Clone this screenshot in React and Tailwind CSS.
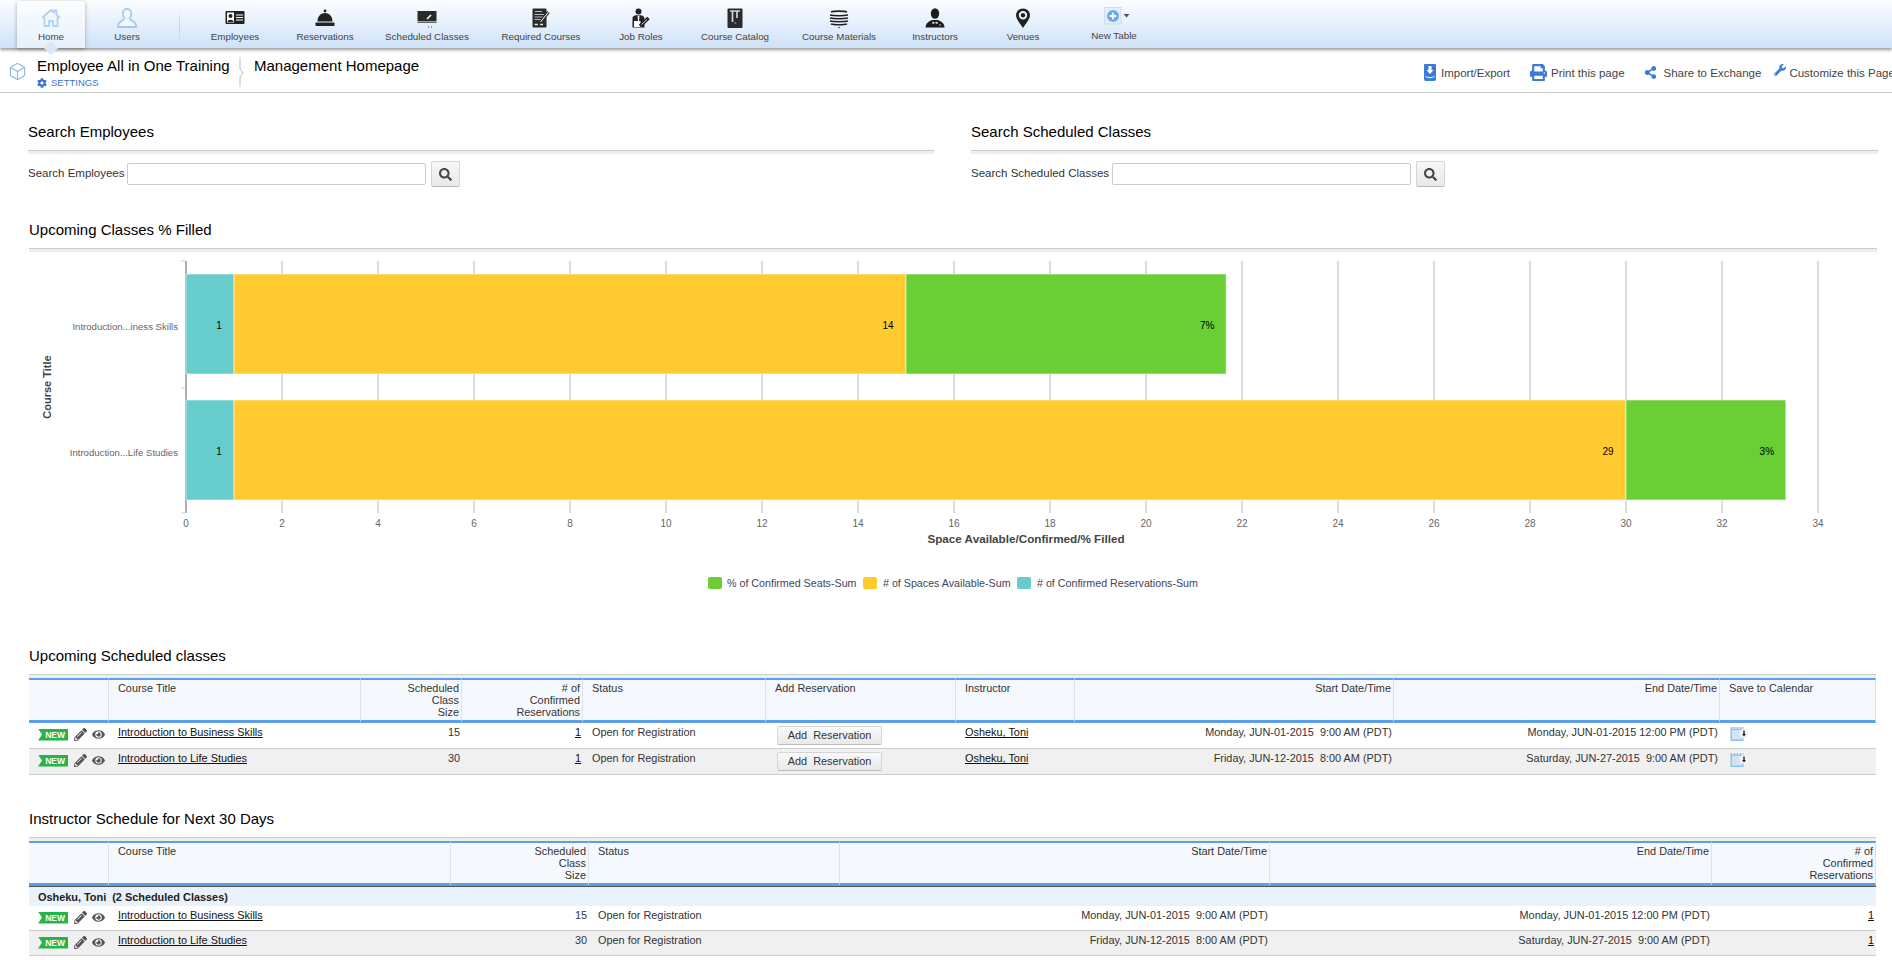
import { Box } from "lucide-react";
import { FaCog, FaEye, FaPencilAlt, FaPrint, FaSearch, FaShareAlt, FaWrench } from "react-icons/fa";

// nav icons are all drawn on a 20x20 box
const HomeIcon = () => (
  <svg viewBox="0 0 20 20" className="h-5 w-5">
    <path d="M10 2 L1.5 9.5 H3.5 V18 H8 V13 H12 V18 H16.5 V9.5 H18.5 L15.5 6.8 V2.5 H13 V4.5 Z" fill="#f1f7fe" stroke="#b2d1f3" strokeWidth="1.8" strokeLinejoin="round" />
  </svg>
);

const UserIcon = () => (
  <svg viewBox="0 0 20 20" className="h-5 w-5">
    <ellipse cx="10" cy="6" rx="4.2" ry="5.2" fill="#f2f7fd" stroke="#a5c8ef" strokeWidth="1.8" />
    <path d="M7 10.5 C6 13.5 1 13.5 1 17.5 V19 H19 V17.5 C19 13.5 14 13.5 13 10.5" fill="#f2f7fd" stroke="#a5c8ef" strokeWidth="1.8" />
  </svg>
);

const CardIcon = () => (
  <svg viewBox="0 0 20 20" className="h-5 w-5">
    <rect x="0.5" y="3" width="19" height="13" rx="1" fill="#222" />
    <rect x="2" y="4.5" width="7" height="10" fill="#fff" />
    <circle cx="5.5" cy="8" r="2" fill="#222" />
    <path d="M2.5 14 C2.5 11 8.5 11 8.5 14 Z" fill="#222" />
    <path d="M11 7 H18 M11 9.5 H18 M11 12 H18" stroke="#fff" strokeWidth="1.2" />
  </svg>
);

const BellIcon = () => (
  <svg viewBox="0 0 20 20" className="h-5 w-5">
    <circle cx="10" cy="3" r="1.4" fill="#222" />
    <path d="M2.5 13.5 C2.5 8 6 5 10 5 C14 5 17.5 8 17.5 13.5 Z" fill="#222" />
    <rect x="0.5" y="14.5" width="19" height="3.5" rx="0.8" fill="#222" />
  </svg>
);

const BoardIcon = () => (
  <svg viewBox="0 0 20 20" className="h-5 w-5">
    <rect x="0.5" y="3" width="19" height="10" fill="#2a2a2a" />
    <path d="M10 11 L14 7" stroke="#fff" strokeWidth="1.6" />
    <rect x="0.5" y="13.5" width="19" height="1.4" fill="#555" />
    <path d="M11 19 H12 M14 19 H15" stroke="#444" strokeWidth="1" />
  </svg>
);

const DocIcon = () => (
  <svg viewBox="0 0 20 20" className="h-5 w-5">
    <rect x="1.5" y="0.5" width="14" height="19" rx="1" fill="#2b2b2b" />
    <path d="M4 3.5 H11 M3.5 6.5 H13 M3.5 9 H13 M3.5 11.5 H10" stroke="#bbb" strokeWidth="1" />
    <path d="M3.5 16.5 H7 M9 16.5 H12" stroke="#ddd" strokeWidth="1.4" />
    <path d="M9.5 14 L17.5 4" stroke="#2b2b2b" strokeWidth="3" />
    <path d="M9.5 14 L17.5 4" stroke="#fff" strokeWidth="1" />
  </svg>
);

const JobIcon = () => (
  <svg viewBox="0 0 20 20" className="h-5 w-5">
    <circle cx="7.5" cy="3.5" r="3" fill="#222" />
    <path d="M1.5 19.5 V10 C1.5 8 4 7 7.5 7 C11 7 13 8 13.5 10 V19.5 Z" fill="#222" />
    <path d="M6.5 7.5 H8.5 L8 13 H7 Z" fill="#fff" />
    <rect x="3" y="13" width="6.5" height="6" fill="#fff" />
    <path d="M9 18 L17.5 10" stroke="#222" strokeWidth="3.6" />
    <path d="M10.5 16.5 L16 11.5" stroke="#fff" strokeWidth="0.8" />
  </svg>
);

const BookIcon = () => (
  <svg viewBox="0 0 20 20" className="h-5 w-5">
    <rect x="2.5" y="0.5" width="15" height="19.5" rx="1" fill="#2b2b2b" />
    <path d="M5 3 H15" stroke="#ddd" strokeWidth="1.4" />
    <path d="M7.5 3 V14 M12 3 V10" stroke="#ddd" strokeWidth="1.6" />
    <path d="M9.5 16 L10.5 14 L11 16" stroke="#888" strokeWidth="0.8" fill="none" />
  </svg>
);

const StackIcon = () => (
  <svg viewBox="0 0 20 20" className="h-5 w-5">
    <path d="M2 4 C5 2.8 15 2.8 18 4 M1 7 C5 8 15 8 19 7 M1 10 C5 11 15 11 19 10 M1 13 C5 14 15 14 19 13 M2 16 C5 17 15 17 18 16" stroke="#222" strokeWidth="1.7" fill="none" />
    <path d="M9.5 19.5 H11" stroke="#333" strokeWidth="1" />
  </svg>
);

const InstructorIcon = () => (
  <svg viewBox="0 0 20 20" className="h-5 w-5">
    <ellipse cx="10" cy="5.5" rx="4.2" ry="5.3" fill="#1c1c1c" />
    <path d="M0.5 19.5 C0.5 15 4 13.5 7 12 H13 C16 13.5 19.5 15 19.5 19.5 Z" fill="#1c1c1c" />
    <path d="M7.5 13.5 L10 14.7 L12.5 13.5 V16 L10 14.9 L7.5 16 Z" fill="#fff" />
    <circle cx="15" cy="17" r="0.7" fill="#fff" />
  </svg>
);

const PinIcon = () => (
  <svg viewBox="0 0 20 20" className="h-5 w-5">
    <path fillRule="evenodd" d="M10 0.5 C5.8 0.5 3 3.5 3 7.3 C3 11 7.5 16 10 20 C12.5 16 17 11 17 7.3 C17 3.5 14.2 0.5 10 0.5 Z M10 3 A4.2 4.2 0 1 0 10 11.4 A4.2 4.2 0 1 0 10 3 Z" fill="#222" />
    <circle cx="10" cy="7.2" r="2.2" fill="#222" />
  </svg>
);

const NewTableIcon = () => (
  <svg viewBox="0 0 26 18" className="h-[18px] w-[26px]">
    <rect x="0.5" y="0.5" width="16.5" height="16.5" fill="#e3effc" stroke="#9cc3ee" strokeWidth="0.8" strokeDasharray="1 1" />
    <circle cx="9" cy="9" r="6" fill="#6ea9ec" />
    <path d="M9 5.8 V12.2 M5.8 9 H12.2" stroke="#fff" strokeWidth="1.8" />
    <path d="M19.5 7 H25.5 L22.5 10.5 Z" fill="#555" />
  </svg>
);

const navItems = [
  { label: "Employees", w: "w-[110px]", icon: <CardIcon /> },
  { label: "Reservations", w: "w-[70px]", icon: <BellIcon /> },
  { label: "Scheduled Classes", w: "w-[134px]", icon: <BoardIcon /> },
  { label: "Required Courses", w: "w-[94px]", icon: <DocIcon /> },
  { label: "Job Roles", w: "w-[106px]", icon: <JobIcon /> },
  { label: "Course Catalog", w: "w-[82px]", icon: <BookIcon /> },
  { label: "Course Materials", w: "w-[126px]", icon: <StackIcon /> },
  { label: "Instructors", w: "w-[66px]", icon: <InstructorIcon /> },
  { label: "Venues", w: "w-[110px]", icon: <PinIcon /> },
];

function NavItem({ label, w, icon }) {
  return (
    <div className={`${w} flex shrink-0 flex-col items-center pt-2`}>
      <div className="flex h-5 items-center justify-center">{icon}</div>
      <span className="mt-[2px] whitespace-nowrap text-[9.8px] leading-[13px] text-[#444]">{label}</span>
    </div>
  );
}

function TopNav() {
  return (
    <div className="relative z-10 flex h-12 shrink-0 bg-gradient-to-b from-[#fbfdff] to-[#cfe2f8] pl-[17px] shadow-[0_2px_3px_rgba(0,0,0,0.4)]">
      <div className="relative mt-px flex h-[47px] w-[68px] shrink-0 flex-col items-center rounded-t-[3px] bg-gradient-to-b from-[#fcfdff] to-[#e6f0fb] pt-[7px] shadow-[0_1px_4px_rgba(0,0,0,0.3)]">
        <div className="flex h-5 items-center justify-center"><HomeIcon /></div>
        <span className="mt-[2px] text-[9.8px] leading-[13px] text-[#444]">Home</span>
        <div className="absolute -bottom-[5px] left-[29px] h-[10px] w-[10px] rotate-45 bg-[#dbe7f4]" />
      </div>
      <NavItem label="Users" w="w-[84px]" icon={<UserIcon />} />
      <div className="ml-[10px] mt-2 h-[38px] w-px shrink-0 bg-gradient-to-b from-transparent via-[#b7d0ec] to-transparent" />
      {navItems.map((item) => (
        <NavItem key={item.label} {...item} />
      ))}
      <div className="flex w-[72px] shrink-0 flex-col items-center pt-[7px]">
        <div className="flex h-[18px] items-center pl-[6px]"><NewTableIcon /></div>
        <span className="mt-[4px] whitespace-nowrap text-[9.8px] leading-[13px] text-[#444]">New Table</span>
      </div>
    </div>
  );
}

function ImportIcon() {
  return (
    <svg viewBox="0 0 12 17" className="h-[17px] w-3 shrink-0">
      <path d="M1 0 H11 A1 1 0 0 1 12 1 V15 A2 2 0 0 1 10 17 H2 A2 2 0 0 1 0 15 V1 A1 1 0 0 1 1 0 Z" fill="#3b7bdc" />
      <path d="M4.5 2 H7.5 V6 H9.5 L6 10 L2.5 6 H4.5 Z" fill="#fff" />
      <path d="M1.5 12.5 C4 14 8 14 10.5 12.5" stroke="#fff" strokeWidth="1" fill="none" />
    </svg>
  );
}

function SubHeader() {
  return (
    <div className="flex h-[45px] shrink-0 border-b border-[#ccc] text-[#222]">
      <div className="ml-2 mt-[14px] w-[29px] shrink-0">
        <Box className="h-[19px] w-[19px] text-[#8db7e6]" strokeWidth={1.4} />
      </div>
      <div className="w-[202px] shrink-0 pt-[10px]">
        <div className="whitespace-nowrap text-[15px] leading-4 text-black">Employee All in One Training</div>
        <div className="mt-[3px] flex items-center gap-[4px] text-[9.5px] leading-3 text-[#3b74d8]">
          <FaCog className="h-[10px] w-[10px]" />
          SETTINGS
        </div>
      </div>
      <svg viewBox="0 0 5 30" className="mt-[9px] h-[30px] w-[5px] shrink-0">
        <path d="M1 0 V12 L4 16 L1 20 V30" stroke="#bbb" strokeWidth="1" fill="none" />
      </svg>
      <div className="ml-[10px] whitespace-nowrap pt-[10px] text-[15px] leading-4 text-black">Management Homepage</div>
      <div className="flex-1" />
      <div className="flex w-[468px] shrink-0 items-start overflow-hidden pt-4 text-[11.5px] leading-4 text-[#444]">
        <ImportIcon />
        <span className="ml-[5px] whitespace-nowrap pt-px">Import/Export</span>
        <FaPrint className="ml-[20px] h-[17px] w-[17px] shrink-0 text-[#3b7bdc]" />
        <span className="ml-[4px] whitespace-nowrap pt-px">Print this page</span>
        <FaShareAlt className="ml-[19px] mt-[2px] h-[13px] w-[13px] shrink-0 text-[#3b7bdc]" />
        <span className="ml-[7px] whitespace-nowrap pt-px">Share to Exchange</span>
        <FaWrench className="ml-[13px] h-[12px] w-[12px] shrink-0 text-[#3b7bdc]" />
        <span className="ml-[3px] whitespace-nowrap pt-px">Customize this Page</span>
      </div>
    </div>
  );
}

function SectionTitle({ children }) {
  return (
    <div>
      <div className="mb-[9px] whitespace-nowrap text-[15px] leading-[18px] text-black">{children}</div>
      <div className="h-1 border-t border-[#ccc] bg-[#eee]" />
    </div>
  );
}

function SearchBox({ label, inputClass }) {
  return (
    <div className="mt-[7px] flex items-center">
      <span className="whitespace-nowrap text-[11.5px] text-[#333]">{label}</span>
      <div className={`${inputClass} h-[22px] rounded-[2px] border border-[#ccc] bg-white`} />
      <div className="ml-[5px] flex h-[26px] w-[29px] items-center justify-center rounded-[2px] border border-[#d5d5d5] border-b-[#bbb] bg-gradient-to-b from-[#f7f7f7] to-[#e9e9e9]">
        <FaSearch className="h-[13px] w-[13px] text-[#444]" />
      </div>
    </div>
  );
}

const ticks = [0, 2, 4, 6, 8, 10, 12, 14, 16, 18, 20, 22, 24, 26, 28, 30, 32, 34];
const unit = 48;
const axisX = 186;

const bars = [
  { y: 274, label: "Introduction...iness Skills", seats: 1, spaces: 14, percent: 21.67, pctLabel: "7%" },
  { y: 400, label: "Introduction...Life Studies", seats: 1, spaces: 29, percent: 33.33, pctLabel: "3%" },
];

function Chart() {
  return (
    <svg viewBox="0 255 1892 345" className="mt-[3px] block h-[345px] w-[1892px] shrink-0">
      {ticks.map((t) => (
        <g key={t}>
          {t > 0 && <line x1={axisX + t * unit} x2={axisX + t * unit} y1="261" y2="513" stroke="#ccc" strokeWidth="1.4" />}
          <text x={axisX + t * unit} y="527" textAnchor="middle" fontSize="10" fill="#666">{t}</text>
        </g>
      ))}
      <line x1="186" x2="186" y1="261" y2="513" stroke="#999" strokeWidth="1.6" />
      <path d="M181 261 H186 M181 388 H186 M181 513 H186" stroke="#ccc" strokeWidth="1" />
      {bars.map((b) => {
        const teal = axisX + b.seats * unit;
        const yellow = teal + b.spaces * unit;
        const green = axisX + b.percent * unit;
        return (
          <g key={b.y} stroke="#fff" strokeOpacity="0.55" strokeWidth="1">
            <rect x={axisX} y={b.y} width={teal - axisX} height="100" fill="#66cdcc" />
            <rect x={teal} y={b.y} width={yellow - teal} height="100" fill="#ffcb30" />
            <rect x={yellow} y={b.y} width={green - yellow} height="100" fill="#69cf34" />
            <g stroke="none" fontSize="10" fill="#000" textAnchor="middle">
              <text x="219" y={b.y + 55}>{b.seats}</text>
              <text x={yellow - 18} y={b.y + 55}>{b.spaces}</text>
              <text x={green - 19} y={b.y + 55}>{b.pctLabel}</text>
            </g>
            <text x="178" y={b.y + 56} textAnchor="end" fontSize="9.6" fill="#666" stroke="none">{b.label}</text>
          </g>
        );
      })}
      <text x="1026" y="543" textAnchor="middle" fontSize="11.7" fontWeight="700" fill="#444">Space Available/Confirmed/% Filled</text>
      <text transform="translate(51 387) rotate(-90)" textAnchor="middle" fontSize="11" fontWeight="700" fill="#444">Course Title</text>
      <rect x="708" y="577" width="14" height="12" rx="2" fill="#69cf34" />
      <text x="727" y="587" fontSize="10.7" fill="#445">% of Confirmed Seats-Sum</text>
      <rect x="863" y="577" width="14" height="12" rx="2" fill="#ffcb30" />
      <text x="883" y="587" fontSize="10.7" fill="#445"># of Spaces Available-Sum</text>
      <rect x="1017" y="577" width="14" height="12" rx="2" fill="#66cdcc" />
      <text x="1037" y="587" fontSize="10.7" fill="#445"># of Confirmed Reservations-Sum</text>
    </svg>
  );
}

function NewBadge() {
  return (
    <div className="flex h-3 w-[30px] items-center justify-end bg-[#27b34b] pr-[3px] text-[8.5px] font-bold leading-3 text-white [clip-path:polygon(0_0,100%_0,100%_100%,0_100%,4px_50%)]">
      NEW
    </div>
  );
}

function RowIcons() {
  return (
    <div className="flex items-center pl-[9px] pt-[5px]">
      <NewBadge />
      <FaPencilAlt className="ml-[6px] h-[13px] w-[13px] text-[#555]" />
      <FaEye className="ml-[5px] h-[13px] w-[13px] text-[#555]" />
    </div>
  );
}

function CalendarIcon() {
  return (
    <svg viewBox="0 0 19 15" className="ml-[10px] mt-[3px] h-[15px] w-[19px]">
      <rect x="0.5" y="1" width="13" height="14" fill="#96c2ea" />
      <rect x="2" y="4" width="10" height="9.5" fill="#cfe4f7" />
      <path d="M3 0 V3 M6 0 V3 M9 0 V3 M12 0 V3" stroke="#fff" strokeWidth="1" />
      <circle cx="14" cy="7.5" r="4.5" fill="#f4f4f4" />
      <path d="M14 4.5 V9" stroke="#222" strokeWidth="1.4" />
      <path d="M12 8 H16 L14 10.5 Z" fill="#222" />
    </svg>
  );
}

function HeadCell({ lines, right }) {
  return (
    <th className={`border-r border-[#d5e3f2] px-0 pt-[2px] align-top text-[10.9px] font-normal leading-3 text-[#333] ${right ? "pr-[2px] text-right" : "pl-[9px] text-left"}`}>
      {lines.map((l) => (
        <div key={l} className="whitespace-nowrap">{l}</div>
      ))}
    </th>
  );
}

function Td({ children, right, rowClass }) {
  return (
    <td className={`${rowClass} whitespace-nowrap border-b border-[#ccc] pt-[3px] align-top text-[10.9px] leading-3 text-[#333] ${right ? "pr-[2px] text-right" : "pl-[9px] text-left"}`}>
      {children}
    </td>
  );
}

const LinkText = ({ children }) => <span className="text-[#111] underline">{children}</span>;

const scheduleRows = [
  { title: "Introduction to Business Skills", size: 15, start: "Monday, JUN-01-2015\u00a0 9:00 AM (PDT)", end: "Monday, JUN-01-2015 12:00 PM (PDT)" },
  { title: "Introduction to Life Studies", size: 30, start: "Friday, JUN-12-2015\u00a0 8:00 AM (PDT)", end: "Saturday, JUN-27-2015\u00a0 9:00 AM (PDT)" },
];

function ClassesTable() {
  return (
    <table className="w-[1847px] table-fixed border-separate border-spacing-0">
      <colgroup>
        <col className="w-[80px]" /><col className="w-[252px]" /><col className="w-[101px]" /><col className="w-[121px]" /><col className="w-[183px]" />
        <col className="w-[190px]" /><col className="w-[119px]" /><col className="w-[319px]" /><col className="w-[326px]" /><col className="w-[156px]" />
      </colgroup>
      <thead className="bg-[#f5f9fe] [&_th]:h-[45px] [&_th]:border-b-[3px] [&_th]:border-t-2 [&_th]:border-b-[#5b9fe8] [&_th]:border-t-[#5b9fe8]">
        <tr>
          <HeadCell lines={[]} />
          <HeadCell lines={["Course Title"]} />
          <HeadCell right lines={["Scheduled", "Class", "Size"]} />
          <HeadCell right lines={["# of", "Confirmed", "Reservations"]} />
          <HeadCell lines={["Status"]} />
          <HeadCell lines={["Add Reservation"]} />
          <HeadCell lines={["Instructor"]} />
          <HeadCell right lines={["Start Date/Time"]} />
          <HeadCell right lines={["End Date/Time"]} />
          <HeadCell lines={["Save to Calendar"]} />
        </tr>
      </thead>
      <tbody>
        {scheduleRows.map((r, i) => {
          const rowClass = `h-[26px] ${i === 1 ? "bg-[#f0f0f0]" : "bg-white"}`;
          return (
            <tr key={r.title}>
              <td className={`${rowClass} border-b border-[#ccc] align-top`}><RowIcons /></td>
              <Td rowClass={rowClass}><LinkText>{r.title}</LinkText></Td>
              <Td rowClass={rowClass} right>{r.size}</Td>
              <Td rowClass={rowClass} right><LinkText>1</LinkText></Td>
              <Td rowClass={rowClass}>Open for Registration</Td>
              <td className={`${rowClass} border-b border-[#ccc] pl-[11px] pt-[3px] align-top`}>
                <div className="flex h-[19px] w-[105px] items-center justify-center rounded-[2px] border border-[#d5d5d5] border-b-[#bbb] bg-gradient-to-b from-[#f9f9f9] to-[#e9e9e9] text-[10.9px] text-[#333]">
                  Add&nbsp; Reservation
                </div>
              </td>
              <Td rowClass={rowClass}><LinkText>Osheku, Toni</LinkText></Td>
              <Td rowClass={rowClass} right>{r.start}</Td>
              <Td rowClass={rowClass} right>{r.end}</Td>
              <td className={`${rowClass} border-b border-[#ccc] align-top`}><CalendarIcon /></td>
            </tr>
          );
        })}
      </tbody>
    </table>
  );
}

function InstructorTable() {
  return (
    <table className="w-[1847px] table-fixed border-separate border-spacing-0">
      <colgroup>
        <col className="w-[80px]" /><col className="w-[342px]" /><col className="w-[138px]" /><col className="w-[251px]" />
        <col className="w-[430px]" /><col className="w-[442px]" /><col className="w-[164px]" />
      </colgroup>
      <thead className="bg-[#f5f9fe] [&_th]:h-[45px] [&_th]:border-b-[3px] [&_th]:border-t-2 [&_th]:border-b-[#5b9fe8] [&_th]:border-t-[#5b9fe8]">
        <tr>
          <HeadCell lines={[]} />
          <HeadCell lines={["Course Title"]} />
          <HeadCell right lines={["Scheduled", "Class", "Size"]} />
          <HeadCell lines={["Status"]} />
          <HeadCell right lines={["Start Date/Time"]} />
          <HeadCell right lines={["End Date/Time"]} />
          <HeadCell right lines={["# of", "Confirmed", "Reservations"]} />
        </tr>
      </thead>
      <tbody>
        <tr>
          <td colSpan={7} className="h-5 border-t border-[#555] bg-[#e9f1fb] pl-[9px] text-[10.9px] font-bold leading-3 text-[#222]">
            Osheku, Toni&nbsp; (2 Scheduled Classes)
          </td>
        </tr>
        {scheduleRows.map((r, i) => {
          const rowClass = `h-[25px] ${i === 1 ? "bg-[#f0f0f0]" : "bg-white"}`;
          return (
            <tr key={r.title}>
              <td className={`${rowClass} border-b border-[#ccc] align-top`}><RowIcons /></td>
              <Td rowClass={rowClass}><LinkText>{r.title}</LinkText></Td>
              <Td rowClass={rowClass} right>{r.size}</Td>
              <Td rowClass={rowClass}>Open for Registration</Td>
              <Td rowClass={rowClass} right>{r.start}</Td>
              <Td rowClass={rowClass} right>{r.end}</Td>
              <Td rowClass={rowClass} right><LinkText>1</LinkText></Td>
            </tr>
          );
        })}
      </tbody>
    </table>
  );
}

export default function App() {
  return (
    <div className="flex h-[960px] w-[1892px] flex-col overflow-hidden bg-white font-['Liberation_Sans',Arial,sans-serif]">
      <TopNav />
      <SubHeader />

      <div className="flex shrink-0 gap-[37px] pl-7 pt-[30px]">
        <div className="w-[906px]">
          <SectionTitle>Search Employees</SectionTitle>
          <SearchBox label="Search Employees" inputClass="ml-[2px] w-[299px]" />
        </div>
        <div className="w-[907px]">
          <SectionTitle>Search Scheduled Classes</SectionTitle>
          <SearchBox label="Search Scheduled Classes" inputClass="ml-[3px] w-[299px]" />
        </div>
      </div>

      <div className="ml-[29px] mt-[34px] w-[1848px] shrink-0">
        <SectionTitle>Upcoming Classes % Filled</SectionTitle>
      </div>
      <Chart />

      <div className="ml-[29px] mt-[47px] w-[1847px] shrink-0">
        <SectionTitle>Upcoming Scheduled classes</SectionTitle>
        <ClassesTable />
      </div>

      <div className="ml-[29px] mt-[35px] w-[1847px] shrink-0">
        <SectionTitle>Instructor Schedule for Next 30 Days</SectionTitle>
        <InstructorTable />
      </div>
    </div>
  );
}
